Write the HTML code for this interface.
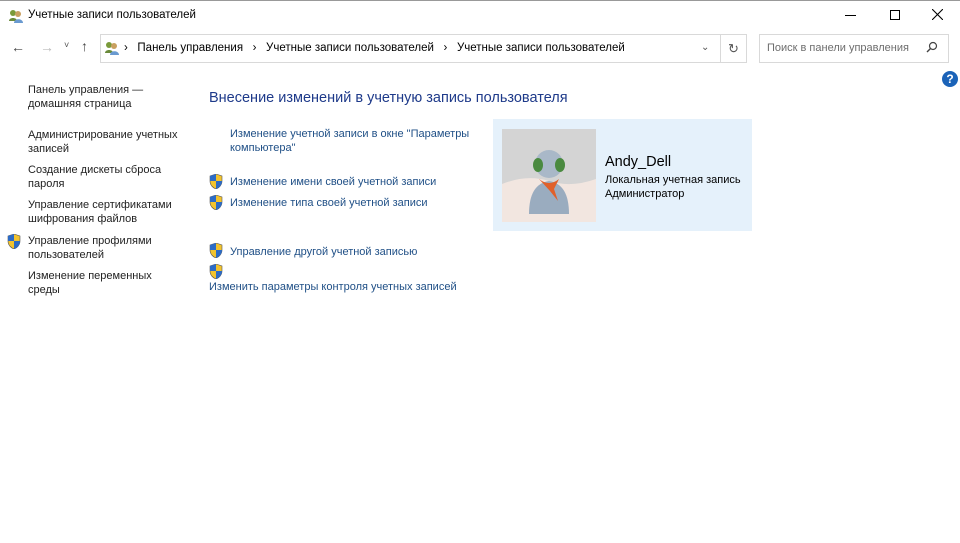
<!DOCTYPE html><html><head><meta charset="utf-8"><style>
*{margin:0;padding:0;box-sizing:border-box}
body{width:960px;height:543px;background:#fff;font-family:"Liberation Sans",sans-serif;font-size:11px;color:#000;position:relative;overflow:hidden;border-top:1px solid #999}
.a{position:absolute;white-space:nowrap}
.l{color:#222;line-height:14px}
.lk{color:#1f4f86;line-height:14px}
svg{position:absolute}
</style></head><body>
<svg style="left:8px;top:7px" width="16" height="16" viewBox="0 0 16 16"><circle cx="5" cy="5" r="3" fill="#7a9a3a"/><path d="M1 13c0-4 8-4 8 0z" fill="#6a8a3a"/><circle cx="10" cy="6" r="3" fill="#c8a060"/><path d="M6 15c0-5 9-5 9 0z" fill="#6a9ad0"/></svg>
<div class="a" style="left:28px;top:8px;font-size:11.5px">Учетные записи пользователей</div>
<div class="a" style="left:845px;top:14px;width:11px;height:1px;background:#000"></div>
<div class="a" style="left:890px;top:9px;width:10px;height:10px;border:1px solid #000"></div>
<svg style="left:932px;top:8px" width="11" height="11"><path d="M0 0L11 11M11 0L0 11" stroke="#000" stroke-width="1.1"/></svg>
<div class="a" style="left:11px;top:38px;font-size:14px;color:#444">←</div>
<div class="a" style="left:40px;top:38px;font-size:14px;color:#bbb">→</div>
<div class="a" style="left:64px;top:39px;font-size:9px;color:#555">˅</div>
<div class="a" style="left:81px;top:37px;font-size:14px;color:#444">↑</div>
<div class="a" style="left:100px;top:33px;width:621px;height:29px;border:1px solid #d9d9d9"></div>
<div class="a" style="left:720px;top:33px;width:27px;height:29px;border:1px solid #d9d9d9;text-align:center;line-height:27px;color:#555;font-size:13px">↻</div>
<div class="a" style="left:701px;top:41px;font-size:10px;color:#555">⌄</div>
<svg style="left:104px;top:39px" width="16" height="16" viewBox="0 0 16 16"><circle cx="5" cy="5" r="3" fill="#7a9a3a"/><path d="M1 13c0-4 8-4 8 0z" fill="#6a8a3a"/><circle cx="10" cy="6" r="3" fill="#c8a060"/><path d="M6 15c0-5 9-5 9 0z" fill="#6a9ad0"/></svg>
<div class="a" style="left:124px;top:41px;font-size:11.5px">›&nbsp;&nbsp; Панель управления &nbsp;&nbsp;›&nbsp;&nbsp; Учетные записи пользователей &nbsp;&nbsp;›&nbsp;&nbsp; Учетные записи пользователей</div>
<div class="a" style="left:759px;top:33px;width:190px;height:29px;border:1px solid #d9d9d9"></div>
<div class="a" style="left:767px;top:41px;font-size:11px;color:#6d6d6d">Поиск в панели управления</div>
<svg style="left:926px;top:40px" width="12" height="12"><circle cx="7" cy="5" r="3.5" fill="none" stroke="#444" stroke-width="1.2"/><path d="M4.5 7.5L1 11" stroke="#444" stroke-width="1.4"/></svg>
<div class="a" style="left:942px;top:70px;width:16px;height:16px;border-radius:50%;background:#1b63b8;color:#fff;font-weight:bold;text-align:center;line-height:16px;font-size:12px">?</div>

<div class="a l" style="left:28px;top:82px">Панель управления —<br>домашняя страница</div>
<div class="a l" style="left:28px;top:127px">Администрирование учетных<br>записей</div>
<div class="a l" style="left:28px;top:162px">Создание дискеты сброса<br>пароля</div>
<div class="a l" style="left:28px;top:197px">Управление сертификатами<br>шифрования файлов</div>
<div class="a l" style="left:28px;top:233px">Управление профилями<br>пользователей</div>
<div class="a l" style="left:28px;top:268px">Изменение переменных<br>среды</div>

<div class="a" style="left:209px;top:89px;font-size:14.5px;color:#1e3a8a">Внесение изменений в учетную запись пользователя</div>
<div class="a lk" style="left:230px;top:126px">Изменение учетной записи в окне "Параметры<br>компьютера"</div>
<div class="a lk" style="left:230px;top:174px">Изменение имени своей учетной записи</div>
<div class="a lk" style="left:230px;top:195px">Изменение типа своей учетной записи</div>
<div class="a lk" style="left:230px;top:244px">Управление другой учетной записью</div>
<div class="a lk" style="left:209px;top:279px">Изменить параметры контроля учетных записей</div>

<div class="a" style="left:493px;top:118px;width:259px;height:112px;background:#e5f1fb"></div>
<svg style="left:502px;top:128px" width="94" height="93" viewBox="0 0 94 93"><rect width="94" height="93" fill="#d4d4d4"/><path d="M0 55Q25 45 47 52T94 50V93H0z" fill="#f2e6e0"/><circle cx="47" cy="35" r="14" fill="#a9b8c8"/><ellipse cx="36" cy="36" rx="5" ry="7" fill="#4a8a40"/><ellipse cx="58" cy="36" rx="5" ry="7" fill="#4a8a40"/><path d="M27 85Q27 55 47 52Q67 55 67 85z" fill="#9aacbf"/><path d="M37 50Q47 58 57 50L52 60L56 72L48 62z" fill="#e0602a"/></svg>
<div class="a" style="left:605px;top:153px;font-size:14.5px">Andy_Dell</div>
<div class="a" style="left:605px;top:172px;line-height:14px">Локальная учетная запись<br>Администратор</div>

<svg width="0" height="0"><defs><g id="sh"><path d="M7 0L13 2V7C13 11 10 14 7 15C4 14 1 11 1 7V2Z" fill="#f2c32e" stroke="#555" stroke-width=".6"/><path d="M7 0V7H1V2ZM7 7H13C13 11 10 14 7 15Z" fill="#2c6bc6"/></g></defs></svg>
<svg style="left:7px;top:233px" width="14" height="15"><use href="#sh"/></svg>
<svg style="left:209px;top:173px" width="14" height="15"><use href="#sh"/></svg>
<svg style="left:209px;top:194px" width="14" height="15"><use href="#sh"/></svg>
<svg style="left:209px;top:242px" width="14" height="15"><use href="#sh"/></svg>
<svg style="left:209px;top:263px" width="14" height="15"><use href="#sh"/></svg>
</body></html>
